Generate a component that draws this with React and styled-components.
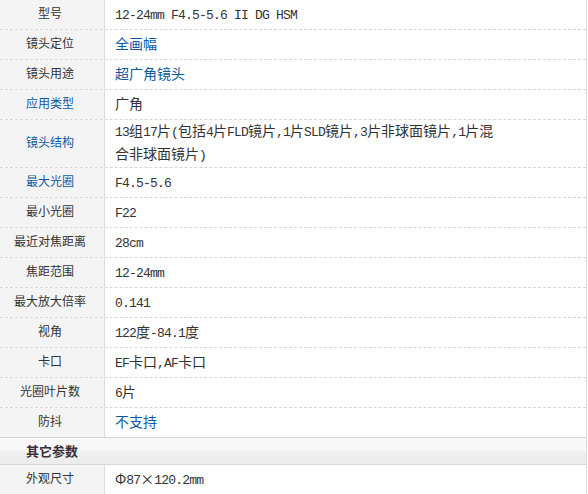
import React from 'react'
import styled, { createGlobalStyle } from 'styled-components'

const GlobalStyle = createGlobalStyle`
  html, body {
    margin: 0;
    padding: 0;
    background: #fff;
  }
  body {
    font-family: "Noto Sans CJK SC", "Liberation Sans", sans-serif;
    color: #333;
  }
`

const Table = styled.div`
  width: 586px;
  border-right: 1px solid #dcdcdc;
`

const Group = styled.div`
  display: flex;
  flex-direction: column;
`

const Row = styled.div`
  display: grid;
  grid-template-columns: 105px 1fr;
  height: ${(p) => (p.$tall ? '47px' : '29px')};
  & + & {
    border-top: 1px dashed #d6d6d6;
  }
`

const Label = styled.div`
  display: flex;
  align-items: center;
  justify-content: center;
  padding: 0 4px 3px 0;
  background: #f4f4f4;
  border-right: 1px solid #dcdcdc;
  font-size: 12px;
  line-height: 16px;
  color: ${(p) => (p.$link ? '#0b5aa6' : '#333')};
`

const Value = styled.div`
  display: flex;
  align-items: center;
  padding: 0 0 ${(p) => (p.$tall ? '4px' : '3px')} 10px;
  overflow: hidden;
  font-size: 14px;
  line-height: ${(p) => (p.$tall ? '23px' : '20px')};
  color: ${(p) => (p.$link ? '#0b5aa6' : '#333')};
`

const Latin = styled.span`
  font-family: "Liberation Mono", monospace;
  font-size: 13px;
  letter-spacing: -0.8px;
  line-height: 1;
  white-space: pre;
`

const SectionHead = styled.div`
  height: 28px;
  display: flex;
  align-items: center;
  padding: 0 0 2px 26px;
  box-sizing: border-box;
  border-top: 1px solid #d6d6d6;
  border-bottom: 1px solid #d6d6d6;
  background: linear-gradient(to bottom, #f9f9f9 0%, #f7f7f7 45%, #efefef 55%, #ececec 100%);
  font-size: 13px;
  font-weight: bold;
  color: #3a2e38;
`

// half-width runs get the monospace face, like the SimSun latin on the page
const Mixed = ({ text }) =>
  text.split(/([\x21-\x7e][\x20-\x7e]*)/).map((part, i) =>
    /[\x21-\x7e]/.test(part) ? <Latin key={i}>{part}</Latin> : part
  )

const specs = [
  { label: '型号', value: '12-24mm F4.5-5.6 II DG HSM' },
  { label: '镜头定位', value: '全画幅', valueLink: true },
  { label: '镜头用途', value: '超广角镜头', valueLink: true },
  { label: '应用类型', value: '广角', labelLink: true },
  {
    label: '镜头结构',
    value: ['13组17片(包括4片FLD镜片,1片SLD镜片,3片非球面镜片,1片混', '合非球面镜片)'],
    labelLink: true,
  },
  { label: '最大光圈', value: 'F4.5-5.6', labelLink: true },
  { label: '最小光圈', value: 'F22' },
  { label: '最近对焦距离', value: '28cm' },
  { label: '焦距范围', value: '12-24mm' },
  { label: '最大放大倍率', value: '0.141' },
  { label: '视角', value: '122度-84.1度' },
  { label: '卡口', value: 'EF卡口,AF卡口' },
  { label: '光圈叶片数', value: '6片' },
  { label: '防抖', value: '不支持', valueLink: true },
]

const other = [{ label: '外观尺寸', value: 'Φ87×120.2mm' }]

const SpecRow = ({ spec }) => {
  const tall = Array.isArray(spec.value)
  return (
    <Row $tall={tall}>
      <Label $link={spec.labelLink}>{spec.label}</Label>
      <Value $link={spec.valueLink} $tall={tall}>
        <span>
          {tall
            ? spec.value.map((line, i) => (
                <React.Fragment key={i}>
                  {i > 0 && <br />}
                  <Mixed text={line} />
                </React.Fragment>
              ))
            : <Mixed text={spec.value} />}
        </span>
      </Value>
    </Row>
  )
}

const App = () => (
  <>
    <GlobalStyle />
    <Table>
      <Group>
        {specs.map((s) => (
          <SpecRow key={s.label} spec={s} />
        ))}
      </Group>
      <SectionHead>其它参数</SectionHead>
      <Group>
        {other.map((s) => (
          <SpecRow key={s.label} spec={s} />
        ))}
      </Group>
    </Table>
  </>
)

export default App
